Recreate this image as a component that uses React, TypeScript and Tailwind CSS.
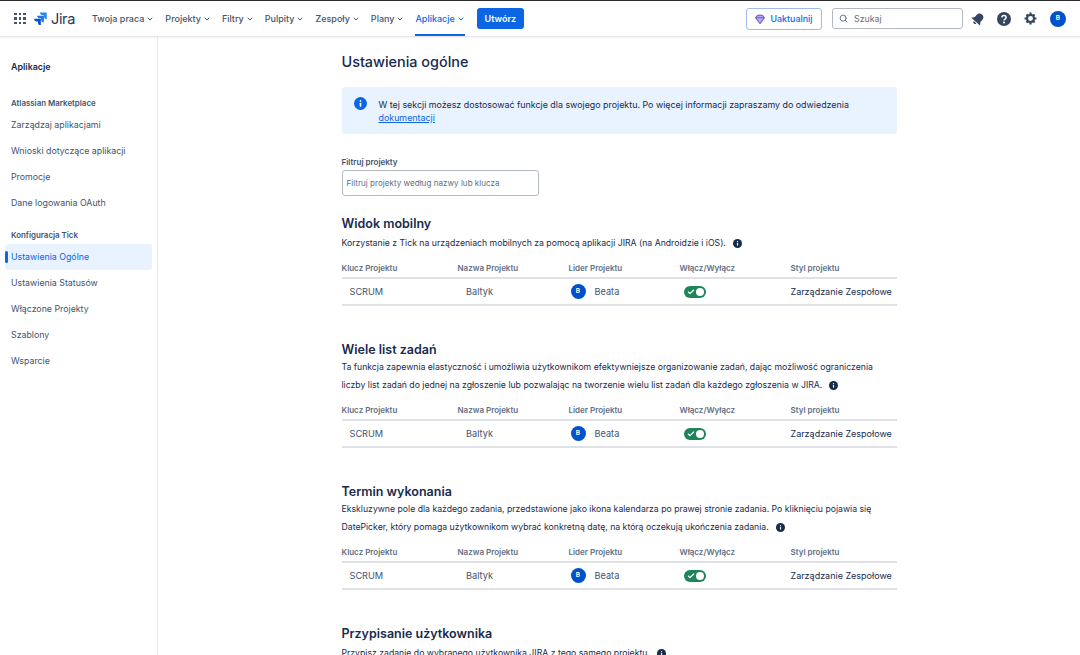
import React from "react";
import { ChevronDown, Search, Check, Gem } from "lucide-react";

const navItems = ["Twoja praca", "Projekty", "Filtry", "Pulpity", "Zespoły", "Plany"];

const JiraLogo = () => (
  <svg width="13" height="13" viewBox="0 0 24 24" fill="#2684ff">
    <path d="M23 1H11.5c0 2.9 2.3 5.2 5.2 5.2h2.1v2c0 2.9 2.3 5.2 5.2 5.3V2c0-.6-.4-1-1-1z" transform="translate(-.5 0)" />
    <path d="M17.3 6.8H5.8c0 2.9 2.3 5.2 5.2 5.2h2.1v2.1c0 2.9 2.3 5.2 5.2 5.2V7.8c0-.6-.4-1-1-1z" fill="#1f78f0" />
    <path d="M11.6 12.5H.1c0 2.9 2.3 5.2 5.2 5.2h2.1v2.1c0 2.9 2.3 5.2 5.2 5.2V13.5c0-.6-.4-1-1-1z" fill="#0052cc" />
  </svg>
);

const InfoDot = ({ className }: { className: string }) => (
  <svg className={className} viewBox="0 0 16 16">
    <circle cx="8" cy="8" r="8" fill="currentColor" />
    <rect x="7" y="7" width="2" height="5" rx="0.8" fill="#fff" />
    <circle cx="8" cy="4.8" r="1.1" fill="#fff" />
  </svg>
);

const Avatar = ({ size }: { size: string }) => (
  <div className={`${size} rounded-full bg-[#0052cc] text-white text-[6.5px] font-semibold flex items-center justify-center`}>B</div>
);

const Toggle = () => (
  <div className="w-[22px] h-[12px] rounded-full bg-[#1f845a] flex items-center justify-between px-[2px]">
    <Check className="w-[8px] h-[8px] text-white ml-[1px]" strokeWidth={3.5} />
    <div className="w-[8px] h-[8px] rounded-full bg-white" />
  </div>
);

const ProjectTable = () => (
  <div className="mt-[6px]">
    <div className="h-[19px] box-content grid grid-cols-[116px_111px_111px_111px_1fr] items-center border-b-2 border-[#dfe1e6] text-[8px] font-semibold text-[#626f86]">
      <div>Klucz Projektu</div>
      <div>Nazwa Projektu</div>
      <div>Lider Projektu</div>
      <div>Włącz/Wyłącz</div>
      <div>Styl projektu</div>
    </div>
    <div className="h-[25px] box-content grid grid-cols-[116px_111px_111px_111px_1fr] items-center border-b-2 border-[#dfe1e6] text-[9.2px] text-[#44546f]">
      <div className="pl-[8px]">SCRUM</div>
      <div className="pl-[8.5px]">Baltyk</div>
      <div className="flex items-center gap-[9px] pl-[2px]">
        <Avatar size="w-[15px] h-[15px]" />
        <span>Beata</span>
      </div>
      <div className="pl-[4px]">
        <Toggle />
      </div>
      <div className="text-[9px] text-[#172b4d] whitespace-nowrap">Zarządzanie Zespołowe</div>
    </div>
  </div>
);

const Section = ({ title, lines }: { title: string; lines: string[] }) => (
  <section className="mb-[35px]">
    <h2 className="text-[12.5px] leading-[18px] font-semibold text-[#172b4d]">{title}</h2>
    <div className={`${lines.length === 1 ? "mt-[1px]" : "-mt-px"} text-[8.7px] leading-[18px] text-[#172b4d]`}>
      {lines.map((line, i) => (
        <div key={line} className="whitespace-nowrap flex items-center">
          {line}
          {i === lines.length - 1 && <InfoDot className="w-[9px] h-[9px] ml-[7px] text-[#172b4d]" />}
        </div>
      ))}
    </div>
    <ProjectTable />
  </section>
);

const SideLink = ({ label, active }: { label: string; active?: boolean }) => (
  <div className={`relative h-[26px] flex items-center pl-[6px] rounded-[3px] text-[8.8px] ${active ? "bg-[#e9f2ff] text-[#0c66e4]" : "text-[#44546f]"}`}>
    {active && <span className="absolute left-0 top-[7px] w-[2.5px] h-[12px] rounded-full bg-[#0c66e4]" />}
    {label}
  </div>
);

export default function App() {
  return (
    <div className="h-[655px] w-[1080px] overflow-hidden bg-white flex flex-col font-['Inter',sans-serif]">
      <div className="h-px bg-[#2b2b2b]" />
      <header className="h-[36px] shrink-0 border-b border-[#e6e8ec] shadow-[0_1px_1px_rgba(9,30,66,0.05)] flex items-center pl-[14px] pr-[14px] relative z-10">
        <div className="grid grid-cols-3 gap-[2px] w-[11.5px] mr-[8.5px]">
          {Array.from({ length: 9 }).map((_, i) => (
            <span key={i} className="w-[2.5px] h-[2.5px] bg-[#44546f]" />
          ))}
        </div>
        <JiraLogo />
        <span className="ml-[4px] text-[14.5px] font-normal text-[#253858] w-[21px] tracking-tight">Jira</span>
        <nav className="flex items-center ml-[20px] h-full gap-[11px] text-[9px] font-medium text-[#44546f]">
          {navItems.map((item) => (
            <div key={item} className="flex items-center gap-[2px]">
              {item}
              <ChevronDown className="w-[8px] h-[8px]" strokeWidth={3} />
            </div>
          ))}
          <div className="relative h-full flex items-center gap-[2px] text-[#0c66e4]">
            Aplikacje
            <ChevronDown className="w-[8px] h-[8px]" strokeWidth={3} />
            <span className="absolute left-0 right-0 bottom-0 h-[2px] bg-[#0c66e4]" />
          </div>
        </nav>
        <button className="ml-[12px] h-[21px] w-[47px] rounded-[3px] bg-[#0c66e4] text-white text-[9px] font-semibold">Utwórz</button>
        <button className="ml-auto h-[22px] w-[76px] rounded-[3px] border border-[#a3b9f0] flex items-center justify-center gap-[5px] text-[8.9px] font-medium text-[#0c66e4]">
          <Gem className="w-[10px] h-[10px] text-[#6e5dc6] fill-[#b8acf6]" strokeWidth={2.5} />
          Uaktualnij
        </button>
        <div className="ml-[10px] h-[21px] w-[131px] rounded-[3px] border border-[#b3b9c4] flex items-center pl-[6px] text-[8.8px] text-[#626f86]">
          <Search className="w-[9px] h-[9px] mr-[6px]" strokeWidth={2.5} />
          Szukaj
        </div>
        <svg className="ml-[8px] w-[14px] h-[14px]" viewBox="0 0 24 24" fill="#344563">
          <g transform="rotate(42 12 12)">
            <path d="M12 1.5c-4 0-6.500 2.800-6.500 6.500v5L2 18h20l-3.500-5V8c0-3.700-2.500-6.500-6.500-6.500z" />
            <path d="M9 19.500a3 3 0 006 0z" />
          </g>
        </svg>
        <svg className="ml-[12px] w-[14px] h-[14px]" viewBox="0 0 16 16">
          <circle cx="8" cy="8" r="8" fill="#344563" />
          <path d="M5.600 6.200C5.700 4.900 6.800 4.100 8 4.100c1.400 0 2.400.9 2.400 2.100 0 1.900-2.400 1.800-2.400 3.500" fill="none" stroke="#fff" strokeWidth="1.700" />
          <circle cx="8" cy="12" r="1.100" fill="#fff" />
        </svg>
        <svg className="ml-[13px] w-[13px] h-[13px]" viewBox="0 0 24 24" fill="none" stroke="#344563" strokeWidth="4">
          <circle cx="12" cy="12" r="6.500" />
          <path d="M12 1v4M12 19v4M1 12h4M19 12h4M4.500 4.500l3 3M16.500 16.500l3 3M4.500 19.500l3-3M16.500 7.500l3-3" />
        </svg>
        <div className="ml-[13px]">
          <Avatar size="w-[16px] h-[16px]" />
        </div>
      </header>
      <div className="flex flex-1 min-h-0">
        <aside className="w-[158px] shrink-0 border-r border-[#e6e8ec] pl-[5px] pr-[5px]">
          <div className="pl-[6px] pt-[24px] text-[8.9px] leading-[12px] font-semibold text-[#172b4d]">Aplikacje</div>
          <div className="pl-[6px] mt-[24px] mb-[3px] text-[7.9px] leading-[12px] font-semibold text-[#44546f]">Atlassian Marketplace</div>
          <SideLink label="Zarządzaj aplikacjami" />
          <SideLink label="Wnioski dotyczące aplikacji" />
          <SideLink label="Promocje" />
          <SideLink label="Dane logowania OAuth" />
          <div className="pl-[6px] mt-[13px] mb-[3px] text-[7.9px] leading-[12px] font-semibold text-[#44546f]">Konfiguracja Tick</div>
          <SideLink label="Ustawienia Ogólne" active />
          <SideLink label="Ustawienia Statusów" />
          <SideLink label="Włączone Projekty" />
          <SideLink label="Szablony" />
          <SideLink label="Wsparcie" />
        </aside>
        <main className="flex-1 min-w-0 overflow-hidden">
          <div className="w-[555px] mx-auto">
            <h1 className="pt-[15px] text-[14.4px] leading-[20px] font-medium text-[#172b4d]">Ustawienia ogólne</h1>
            <div className="mt-[15px] h-[47px] rounded-[3px] bg-[#e9f2ff] flex pl-[12px] pt-[10px] text-[8.9px] leading-[13px] text-[#172b4d]">
              <InfoDot className="w-[13px] h-[13px] text-[#0c66e4] shrink-0" />
              <div className="ml-[12px] mt-px">
                <div className="whitespace-nowrap">W tej sekcji możesz dostosować funkcje dla swojego projektu. Po więcej informacji zapraszamy do odwiedzenia</div>
                <a className="text-[#0c66e4] underline">dokumentacji</a>
              </div>
            </div>
            <label className="block mt-[22px] text-[8px] leading-[12px] font-semibold text-[#44546f]">Filtruj projekty</label>
            <div className="mt-[2px] w-[197px] h-[26px] rounded-[3px] border border-[#b3b9c4] flex items-center pl-[4px] text-[8.1px] text-[#626f86]">
              Filtruj projekty według nazwy lub klucza
            </div>
            <div className="mt-[19px]">
              <Section title="Widok mobilny" lines={["Korzystanie z Tick na urządzeniach mobilnych za pomocą aplikacji JIRA (na Androidzie i iOS)."]} />
              <Section
                title="Wiele list zadań"
                lines={[
                  "Ta funkcja zapewnia elastyczność i umożliwia użytkownikom efektywniejsze organizowanie zadań, dając możliwość ograniczenia",
                  "liczby list zadań do jednej na zgłoszenie lub pozwalając na tworzenie wielu list zadań dla każdego zgłoszenia w JIRA.",
                ]}
              />
              <Section
                title="Termin wykonania"
                lines={[
                  "Ekskluzywne pole dla każdego zadania, przedstawione jako ikona kalendarza po prawej stronie zadania. Po kliknięciu pojawia się",
                  "DatePicker, który pomaga użytkownikom wybrać konkretną datę, na którą oczekują ukończenia zadania.",
                ]}
              />
              <Section title="Przypisanie użytkownika" lines={["Przypisz zadanie do wybranego użytkownika JIRA z tego samego projektu."]} />
            </div>
          </div>
        </main>
      </div>
    </div>
  );
}
